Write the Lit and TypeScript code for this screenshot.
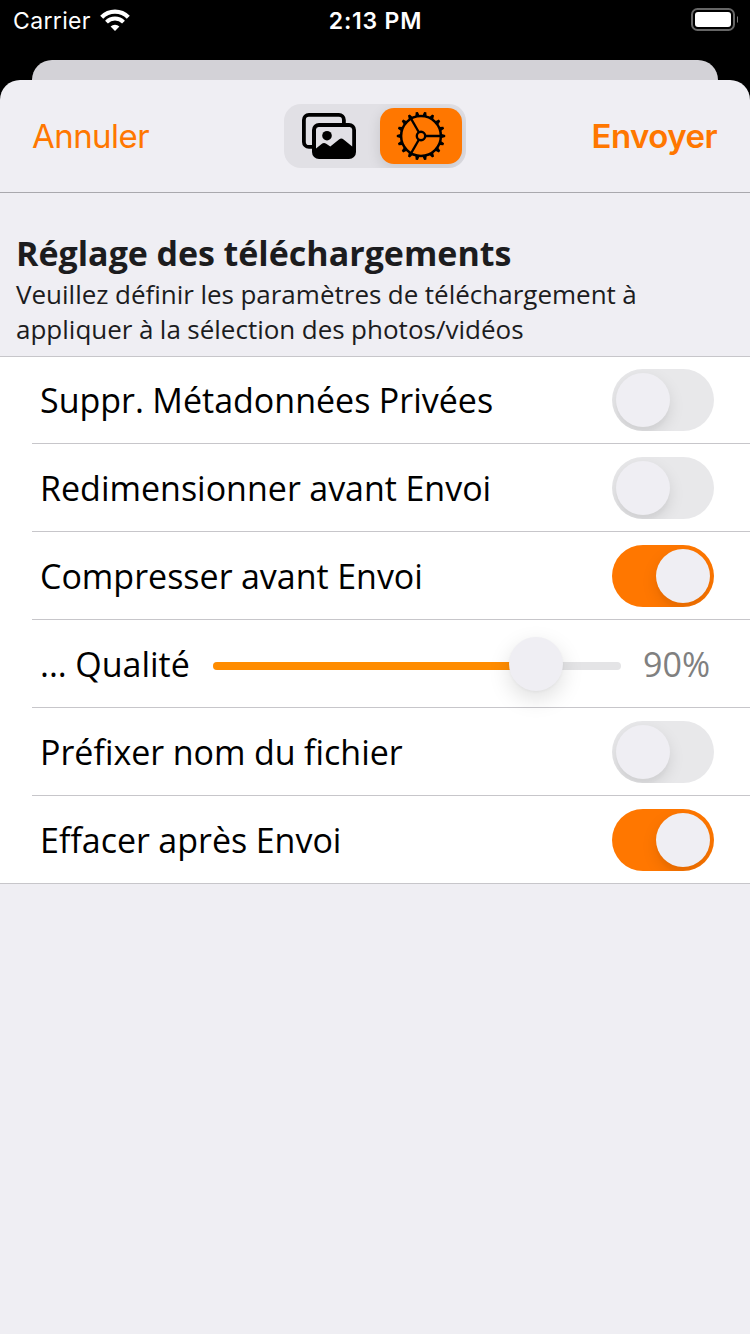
import { LitElement, html, css, svg } from "lit";
import { customElement, property } from "lit/decorators.js";

@customElement("toggle-switch")
class ToggleSwitch extends LitElement {
  @property({ type: Boolean, reflect: true }) on = false;

  static styles = css`
    :host {
      display: flex;
      box-sizing: border-box;
      width: 102px;
      height: 62px;
      padding: 4px;
      border-radius: 31px;
      background: #e8e8ea;
      overflow: hidden;
      flex: none;
    }
    :host([on]) {
      background: #ff7700;
      justify-content: flex-end;
    }
    .knob {
      width: 54px;
      height: 54px;
      border-radius: 50%;
      background: #efeef3;
      box-shadow: 0 6px 16px rgba(0, 0, 0, 0.1), 0 6px 2px rgba(0, 0, 0, 0.02);
    }
  `;

  render() {
    return html`<div class="knob"></div>`;
  }
}

@customElement("app-root")
class AppRoot extends LitElement {
  static styles = css`
    :host {
      display: flex;
      flex-direction: column;
      box-sizing: border-box;
      width: 750px;
      height: 1334px;
      background: #000;
      overflow: hidden;
      font-family: "Open Sans", sans-serif;
    }
    .status {
      display: grid;
      grid-template-columns: 1fr auto 1fr;
      align-items: center;
      height: 40px;
      margin-bottom: 20px;
      padding: 0 12px 0 13px;
      color: #fff;
      font: 400 23px/38px Inter, sans-serif;
    }
    .carrier {
      display: flex;
      align-items: center;
      gap: 9px;
      letter-spacing: 0.35px;
    }
    .carrier span,
    .clock {
      padding-top: 2px;
    }
    .clock {
      font-weight: 600;
      letter-spacing: 0.8px;
    }
    .battery {
      justify-self: end;
    }
    svg {
      display: block;
    }
    .behind {
      height: 20px;
      margin: 0 32px;
      border-radius: 20px 20px 0 0;
      background: #d3d2d7;
      flex: none;
    }
    .sheet {
      flex: 1;
      border-radius: 20px 20px 0 0;
      background: #efeef3;
      overflow: hidden;
    }
    .nav {
      display: grid;
      grid-template-columns: 1fr auto 1fr;
      align-items: center;
      box-sizing: border-box;
      height: 113px;
      padding: 0 32px;
      border-bottom: 1px solid #a9a8ad;
      color: #ff7700;
      font: 400 33px/40px Inter, sans-serif;
      letter-spacing: -0.55px;
    }
    .send {
      justify-self: end;
      margin-right: 1px;
      font-weight: 600;
    }
    .segments {
      display: flex;
      box-sizing: border-box;
      width: 182px;
      height: 64px;
      padding: 4px;
      border-radius: 17px;
      background: #e1e0e5;
      overflow: hidden;
    }
    .segment {
      display: flex;
      align-items: center;
      justify-content: center;
      box-sizing: border-box;
      width: 92px;
      height: 56px;
    }
    .photos {
      padding-right: 10px;
    }
    .selected {
      width: 82px;
      border-radius: 14px;
      background: #ff7700;
      box-shadow: 0 4px 14px rgba(0, 0, 0, 0.12);
    }
    .intro {
      padding: 37px 16px 9px;
      color: #1c1c1e;
      word-spacing: -0.3px;
    }
    .title {
      margin: 0;
      font-size: 34px;
      line-height: 47px;
      font-weight: 700;
    }
    .hint {
      margin: 0;
      font-size: 26px;
      line-height: 35px;
    }
    .list {
      border: solid #c7c6ca;
      border-width: 1px 0;
      background: #fff;
    }
    .row {
      display: flex;
      align-items: center;
      box-sizing: border-box;
      height: 88px;
      margin-left: 32px;
      padding: 1px 36px 0 8px;
      border-bottom: 1px solid #c7c6ca;
      color: #000;
      font-size: 34px;
      word-spacing: -0.4px;
    }
    .row:first-child {
      height: 87px;
      padding-top: 0;
    }
    .row:last-child {
      border-bottom: 0;
      height: 87px;
    }
    .label {
      flex: 1;
      white-space: nowrap;
    }
    .label.short {
      flex: none;
      width: 173px;
    }
    .slider {
      display: grid;
      align-items: center;
      width: 408px;
      height: 54px;
    }
    .track {
      grid-area: 1 / 1;
      height: 8px;
      margin-top: 4px;
      border-radius: 4px;
      background: #e4e4e6;
      overflow: hidden;
    }
    .fill {
      height: 8px;
      background: #ff8c00;
    }
    .thumb {
      grid-area: 1 / 1;
      width: 54px;
      height: 54px;
      border-radius: 50%;
      background: #efeef3;
      box-shadow: 0 8px 22px rgba(0, 0, 0, 0.13), 0 1px 3px rgba(0, 0, 0, 0.04);
    }
    .value {
      margin-left: 22px;
      color: #808080;
    }
  `;

  private toggleRow(label: string, on: boolean) {
    return html`<div class="row"><span class="label">${label}</span><toggle-switch ?on=${on}></toggle-switch></div>`;
  }

  private gear() {
    const teeth = Array.from({ length: 18 }, (_, i) =>
      svg`<path d="M20 -2.3 L24.2 -1.1 V1.1 L20 2.3Z" transform="rotate(${i * 20})"/>`
    );
    const spokes = [0, 120, 240].map(
      (a) => svg`<path d="M4 0H20" stroke="#000" stroke-width="2.3" transform="rotate(${a})"/>`
    );
    return html`<svg width="50" height="50" viewBox="-25 -25 50 50">
      ${teeth}
      <circle r="19.9" fill="none" stroke="#000" stroke-width="2.5" />
      <circle r="4.2" fill="none" stroke="#000" stroke-width="2.4" />
      ${spokes}
    </svg>`;
  }

  render() {
    const thumbLeft = 296;
    return html`
      <div class="status">
        <div class="carrier">
          <span>Carrier</span>
          <svg width="30" height="22" viewBox="0 0 30 22" fill="none" stroke="#fff">
            <path d="M1.7 8.2A18.6 18.6 0 0 1 28.3 8.2" stroke-width="4.2" />
            <path d="M6.5 13.1A12 12 0 0 1 23.5 13.1" stroke-width="4" />
            <path d="M15 22L10.6 17.6A6.2 6.2 0 0 1 19.4 17.6Z" fill="#fff" stroke="none" />
          </svg>
        </div>
        <span class="clock">2:13 PM</span>
        <svg class="battery" width="47" height="24" viewBox="0 0 47 24">
          <rect x="1" y="1" width="42" height="21" rx="5.5" fill="none" stroke="#666" stroke-width="2" />
          <rect x="4" y="4" width="36" height="15" rx="3" fill="#fff" />
          <path d="M46 8V15Q47.6 13.8 47.6 11.5T46 8Z" fill="#777" />
        </svg>
      </div>
      <div class="behind"></div>
      <div class="sheet">
        <div class="nav">
          <span class="cancel">Annuler</span>
          <div class="segments">
            <div class="segment photos">
              <svg width="54" height="46" viewBox="0 0 54 46">
                <rect x="1.9" y="1.9" width="40" height="32" rx="5" fill="none" stroke="#000" stroke-width="3.8" />
                <rect x="10" y="10" width="44" height="36" rx="7" />
                <path d="M14 16.5A2.6 2.6 0 0 1 16.6 14H47.6A2.6 2.6 0 0 1 50.2 16.5V33.5L41.6 26.4Q39.3 24.8 37 26.4L28.3 33.6L24.2 30.7Q21.8 29.4 19.6 30.9L14 35.4Z" fill="#e1e0e5" />
                <circle cx="25" cy="22.7" r="4.8" />
              </svg>
            </div>
            <div class="segment selected">${this.gear()}</div>
          </div>
          <span class="send">Envoyer</span>
        </div>
        <div class="intro">
          <h1 class="title">Réglage des téléchargements</h1>
          <p class="hint">Veuillez définir les paramètres de téléchargement à<br />appliquer à la sélection des photos/vidéos</p>
        </div>
        <div class="list">
          ${this.toggleRow("Suppr. Métadonnées Privées", false)}
          ${this.toggleRow("Redimensionner avant Envoi", false)}
          ${this.toggleRow("Compresser avant Envoi", true)}
          <div class="row">
            <span class="label short">... Qualité</span>
            <div class="slider">
              <div class="track"><div class="fill" style="width:${thumbLeft + 27}px"></div></div>
              <div class="thumb" style="margin-left:${thumbLeft}px"></div>
            </div>
            <span class="value">90%</span>
          </div>
          ${this.toggleRow("Préfixer nom du fichier", false)}
          ${this.toggleRow("Effacer après Envoi", true)}
        </div>
      </div>
    `;
  }
}
